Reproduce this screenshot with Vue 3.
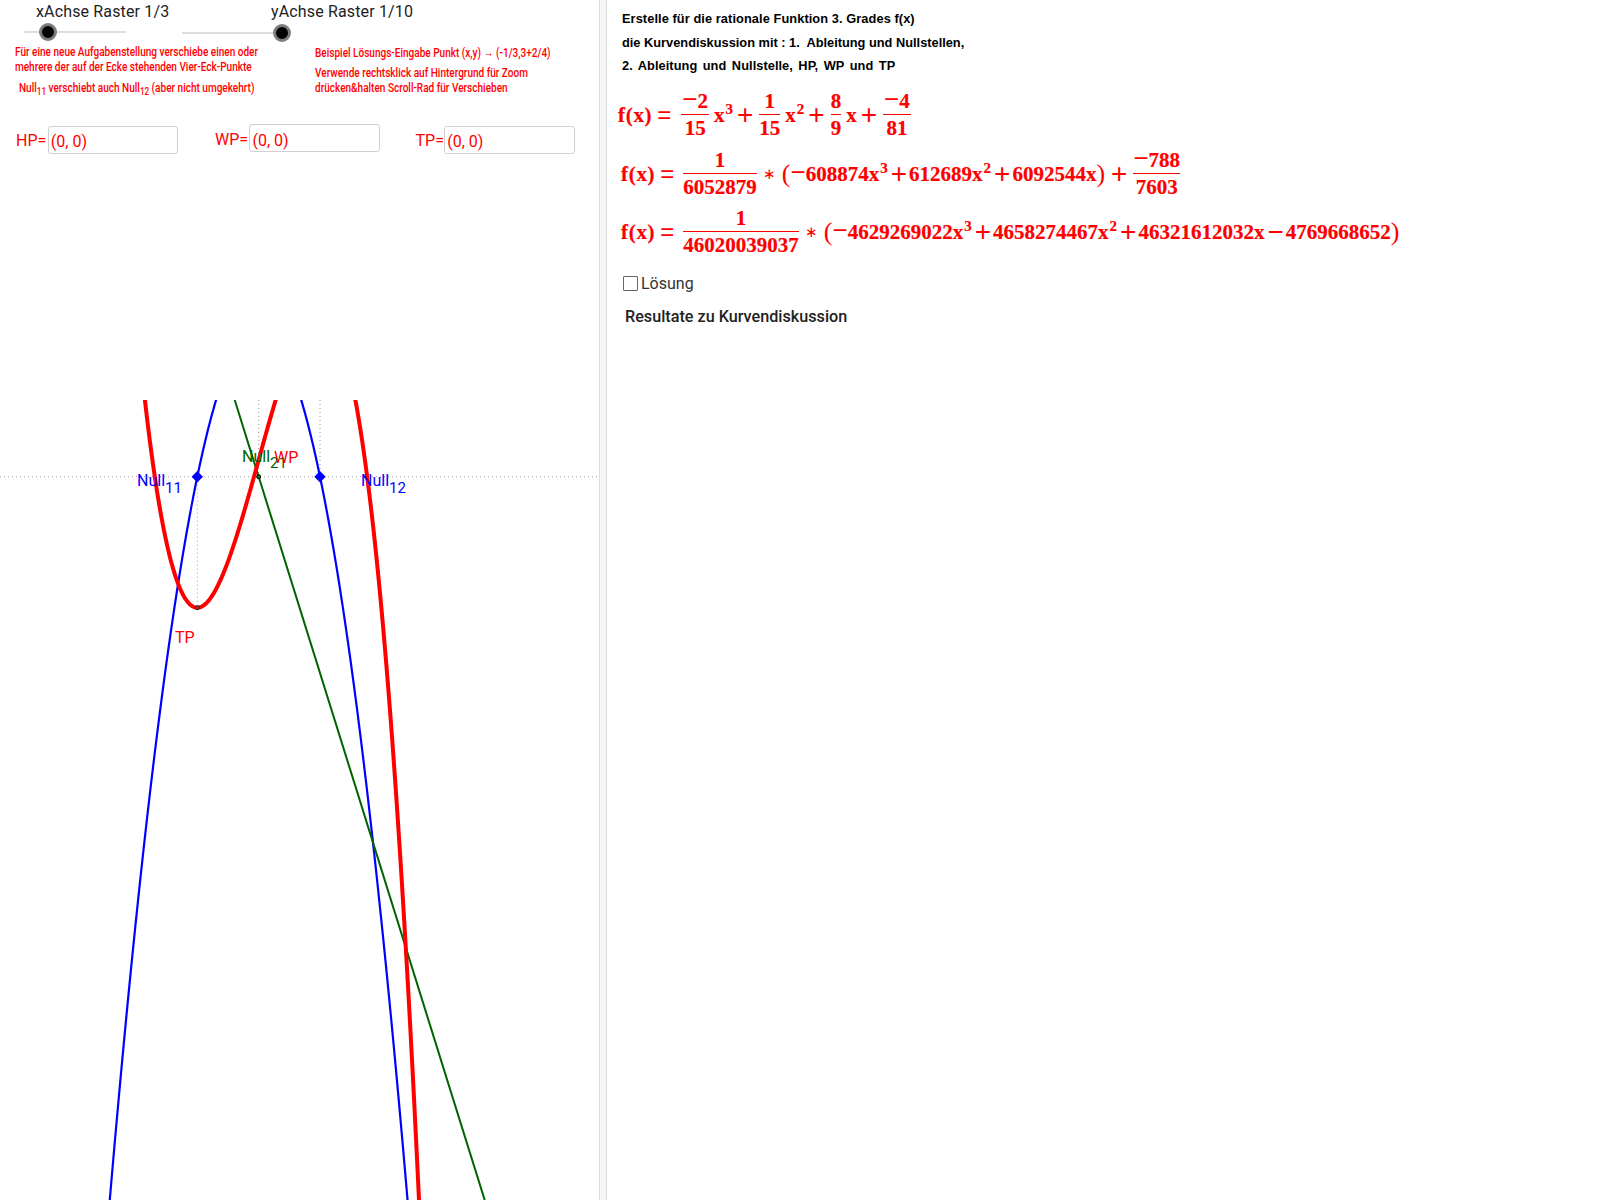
<script setup>
import { computed } from 'vue'

const axisY = 476.7
const x1 = 197.3
const x2 = 320
const L = x2 - x1
const a = 0.0393
const k = 0.00096
const tpY = 607.7

function sample(from, to, fn) {
  const pts = []
  for (let x = from; x <= to + 0.01; x += 1) pts.push(`${x.toFixed(1)},${fn(x).toFixed(2)}`)
  return pts.join(' ')
}
const bluePoints = computed(() => sample(100, 415, (x) => axisY - a * (x - x1) * (x2 - x)))
const redPoints = computed(() =>
  sample(130, 425, (x) => {
    const u = x - x1
    return tpY - k * ((L * u * u) / 2 - (u * u * u) / 3)
  })
)
const inputs = [
  { id: 'hp', label: 'HP=' },
  { id: 'wp', label: 'WP=' },
  { id: 'tp', label: 'TP=' }
]
</script>

<template>
  <div class="applet">
    <section class="left">
      <div class="sliders">
        <div class="slider slider-x">
          <div class="slider-title">xAchse Raster 1/3</div>
          <div class="track"><span class="thumb"></span></div>
        </div>
        <div class="slider slider-y">
          <div class="slider-title">yAchse Raster 1/10</div>
          <div class="track"><span class="thumb"></span></div>
        </div>
      </div>

      <div class="notes">
        <div class="note-col note-a">
          <p class="n1">Für eine neue Aufgabenstellung verschiebe einen oder</p>
          <p class="n2">mehrere der auf der Ecke stehenden Vier-Eck-Punkte</p>
          <p class="n3">Null<sub>11</sub> verschiebt auch Null<sub>12</sub> (aber nicht umgekehrt)</p>
        </div>
        <div class="note-col note-b">
          <p class="m1">Beispiel Lösungs-Eingabe Punkt (x,y) → (-1/3,3+2/4)</p>
          <p class="m2">Verwende rechtsklick auf Hintergrund für Zoom</p>
          <p class="m3">drücken&amp;halten Scroll-Rad für Verschieben</p>
        </div>
      </div>

      <div class="answers">
        <label v-for="item in inputs" :key="item.id" class="answer" :class="item.id">
          <span class="answer-label">{{ item.label }}</span>
          <span class="answer-box">(0, 0)</span>
        </label>
      </div>

      <svg class="graph" viewBox="0 400 599 800" width="599" height="800">
        <g stroke="#9a9a9a" stroke-width="1" stroke-dasharray="1 3" fill="none">
          <line x1="0" x2="599" :y1="axisY" :y2="axisY" />
          <line :x1="x1" :x2="x1" :y1="axisY" :y2="tpY" />
          <line x1="258.7" x2="258.7" y1="400" :y2="axisY" />
          <line :x1="x2" :x2="x2" y1="400" :y2="axisY" />
        </g>
        <polyline :points="bluePoints" fill="none" stroke="#0000ff" stroke-width="2.2" />
        <line x1="234.7" y1="400" x2="484.7" y2="1200" stroke="#006400" stroke-width="2" />
        <polyline :points="redPoints" fill="none" stroke="#ff0000" stroke-width="4" />
        <polygon points="197.3,471 203,476.7 197.3,482.4 191.6,476.7" fill="#0000ff" />
        <polygon points="320,471 325.7,476.7 320,482.4 314.3,476.7" fill="#0000ff" />
        <circle cx="258.7" cy="476.7" r="2" fill="#1a6a1a" stroke="#000" stroke-width="1" />
        <circle cx="258.7" cy="460.5" r="2" fill="#ff0000" />
        <circle cx="197.3" cy="607.7" r="2" fill="#c03020" stroke="#222" stroke-width="1" />
        <g class="labels">
          <text x="137" y="486" fill="#0000ff">Null<tspan class="lsub" dy="7">11</tspan></text>
          <text x="361" y="486" fill="#0000ff">Null<tspan class="lsub" dy="7">12</tspan></text>
          <text x="242" y="461.8" fill="#006400">Null<tspan class="lsub" dy="6">21</tspan></text>
          <text x="274" y="462.5" fill="#ff0000">WP</text>
          <text x="175" y="642.7" fill="#ff0000">TP</text>
        </g>
      </svg>
    </section>

    <div class="divider"></div>

    <section class="right">
      <div class="heading">
        <p class="h1">Erstelle für die rationale Funktion 3. Grades f(x)</p>
        <p class="h2">die Kurvendiskussion mit :&nbsp;1.&nbsp; Ableitung und Nullstellen,</p>
        <p class="h3">2. Ableitung und Nullstelle, HP, WP und TP</p>
      </div>

      <div class="formula f1">
        <span class="term fx">f(x)</span><span class="op eq">=</span>
        <span class="frac fr-a"><span class="num"><i class="minus">−</i>2</span><span class="den">15</span></span>
        <span class="term t-x">x<sup>3</sup></span><span class="op plus">+</span>
        <span class="frac fr-b"><span class="num">1</span><span class="den">15</span></span>
        <span class="term t-x">x<sup>2</sup></span><span class="op plus">+</span>
        <span class="frac fr-c"><span class="num">8</span><span class="den">9</span></span>
        <span class="term t-x">x</span><span class="op plus">+</span>
        <span class="frac fr-d"><span class="num"><i class="minus">−</i>4</span><span class="den">81</span></span>
      </div>

      <div class="formula f2">
        <span class="term fx">f(x)</span><span class="op eq">=</span>
        <span class="frac fr-e"><span class="num">1</span><span class="den">6052879</span></span>
        <span class="thin star">∗</span><span class="thin paren">(</span>
        <span class="term"><i class="minus">−</i>608874x<sup>3</sup></span><span class="op plus">+</span>
        <span class="term">612689x<sup>2</sup></span><span class="op plus">+</span>
        <span class="term">6092544x</span><span class="thin paren">)</span><span class="op plus plus-gap">+</span>
        <span class="frac fr-f"><span class="num"><i class="minus">−</i>788</span><span class="den">7603</span></span>
      </div>

      <div class="formula f3">
        <span class="term fx">f(x)</span><span class="op eq">=</span>
        <span class="frac fr-g"><span class="num">1</span><span class="den">46020039037</span></span>
        <span class="thin star">∗</span><span class="thin paren">(</span>
        <span class="term"><i class="minus">−</i>4629269022x<sup>3</sup></span><span class="op plus">+</span>
        <span class="term">4658274467x<sup>2</sup></span><span class="op plus">+</span>
        <span class="term">46321612032x</span><span class="op plus">−</span>
        <span class="term">4769668652</span><span class="thin paren">)</span>
      </div>

      <label class="solution"><span class="checkbox"></span><span>Lösung</span></label>
      <div class="results">Resultate zu Kurvendiskussion</div>
    </section>
  </div>
</template>

<style>
html, body { margin: 0; background: #fff; }
</style>

<style scoped>
.applet {
  display: flex;
  width: 1600px;
  height: 1200px;
  overflow: hidden;
  background: #fff;
  font-family: Roboto, "Liberation Sans", sans-serif;
}
.left {
  width: 599px;
  flex: none;
  display: flex;
  flex-direction: column;
}
.divider {
  width: 6px;
  flex: none;
  background: #f6f6f6;
  border-left: 1px solid #dcdcdc;
  border-right: 1px solid #dcdcdc;
}
.right {
  flex: 1;
  min-width: 0;
  padding-left: 15px;
}

/* sliders */
.sliders { display: flex; height: 44px; }
.slider-x { box-sizing: border-box; width: 182px; padding-left: 24px; }
.slider-title {
  font-size: 16px;
  line-height: 24px;
  color: #222;
  white-space: nowrap;
  letter-spacing: .15px;
}
.slider-x .slider-title { margin-left: 12px; }
.slider-y .slider-title { margin-left: 89px; }
.track {
  position: relative;
  height: 2px;
  background: #dedede;
}
.slider-x .track { width: 102px; margin-top: 7px; }
.slider-y .track { width: 100px; margin-top: 8px; }
.thumb {
  position: absolute;
  top: -8px;
  width: 12px;
  height: 12px;
  border-radius: 50%;
  background: #000;
  border: 3px solid #7d7d7d;
}
.slider-x .thumb { left: 15px; }
.slider-y .thumb { left: 91px; }

/* notes */
.notes {
  height: 64px;
  display: flex;
  color: #ff0000;
  font-size: 12.4px;
  font-weight: 500;
  white-space: nowrap;
}
.note-col { width: 0; }
.note-a { margin-left: 15px; }
.note-b { margin-left: 300px; }
.note-col p { margin: 0; transform-origin: left top; transform: scaleX(.81); }
.note-col sub { font-size: 10px; line-height: 0; }
.n1, .n2 { line-height: 15px; }
.note-col .n3 { line-height: 27px; margin-left: 4px; }
.note-col .m1 { line-height: 15px; margin-top: 1px; }
.note-col .m2 { line-height: 20px; margin-top: 3px; }
.note-col .m3 { line-height: 15px; margin-top: -3px; }

/* answers */
.answers {
  height: 292px;
  display: flex;
  color: #ff0000;
  font-size: 16px;
}
.answer { display: flex; align-items: center; height: 28px; }
.hp { margin: 17.7px 0 0 16px; }
.wp { margin: 16.3px 0 0 36.7px; }
.tp { margin: 17.7px 0 0 35.5px; }
.answer-label { width: 31.8px; padding-top: 2px; }
.wp .answer-label { width: 34.5px; padding-top: 3px; }
.tp .answer-label { width: 28.7px; }
.answer-box {
  box-sizing: border-box;
  width: 130.5px;
  height: 28px;
  padding: 3px 0 0 2px;
  border: 1px solid #d0d0d0;
  border-radius: 3px;
  line-height: 24px;
}
.wp .answer-box { padding-top: 4px; }

.graph { display: block; flex: none; }
.labels text { font-family: Roboto, "Liberation Sans", sans-serif; font-size: 16px; }
.lsub { font-size: 15px; }

/* heading */
.heading {
  padding-top: 11px;
  font-family: "Liberation Sans", sans-serif;
  font-weight: 700;
  font-size: 12.8px;
  color: #000;
}
.heading p { margin: 0; height: 23.5px; line-height: 15px; white-space: nowrap; }
.h1 { letter-spacing: .08px; }
.h2 { letter-spacing: 0; }
.h3 { letter-spacing: .05px; word-spacing: 1.9px; }

/* formulas */
.formula {
  display: flex;
  align-items: center;
  color: #ff0000;
  font-family: "Liberation Serif", serif;
  font-weight: 700;
  font-size: 21px;
  white-space: nowrap;
  height: 58px;
  -webkit-text-stroke: .2px #ff0000;
}
.f1 { margin-top: 4px; margin-left: -4px; margin-bottom: 1px; }
.f2, .f3 { margin-left: -1px; }
.term { line-height: 24px; }
.fx { letter-spacing: .7px; }
.term sup { font-size: 15px; line-height: 0; vertical-align: 8px; margin-left: 1px; }
.minus {
  font-style: normal;
  font-weight: 400;
  font-family: "Liberation Sans", sans-serif;
  font-size: 26px;
  line-height: 0;
  -webkit-text-stroke: 0;
}
.frac {
  display: inline-flex;
  flex-direction: column;
  align-items: center;
  line-height: 26px;
}
.num { border-bottom: 1px solid #ff0000; width: 100%; text-align: center; }
.fr-a, .fr-d { padding: 0 1px; }
.fr-a .num, .fr-d .num { padding: 0 1px; margin: 0 -1px; }
.op {
  font-family: "Liberation Sans", sans-serif;
  font-weight: 400;
  font-size: 24px;
  line-height: 1;
  -webkit-text-stroke: 0;
}
.eq { margin: 0 9px 0 5px; }
.f1 .eq { margin-right: 10px; }
.plus { margin: 0 2px 0 3px; font-size: 28px; }
.f1 .plus { margin: 0 6px 0 4px; }
.plus-gap { margin: 0 6px; }
.thin { font-family: "Liberation Serif", serif; font-weight: 400; -webkit-text-stroke: 0; }
.star { margin: 0 6px 0 6px; font-size: 15px; }
.paren { font-size: 26px; }
.t-x { margin-left: 5px; }

/* solution */
.solution {
  display: flex;
  align-items: center;
  gap: 3px;
  margin: 13px 0 0 1px;
  font-size: 16px;
  color: #333;
}
.checkbox {
  box-sizing: border-box;
  width: 15px;
  height: 15px;
  border: 1.5px solid #666;
  border-radius: 1px;
}
.results {
  margin: 14px 0 0 3px;
  font-size: 16.2px;
  font-weight: 500;
  color: #222;
}
</style>
